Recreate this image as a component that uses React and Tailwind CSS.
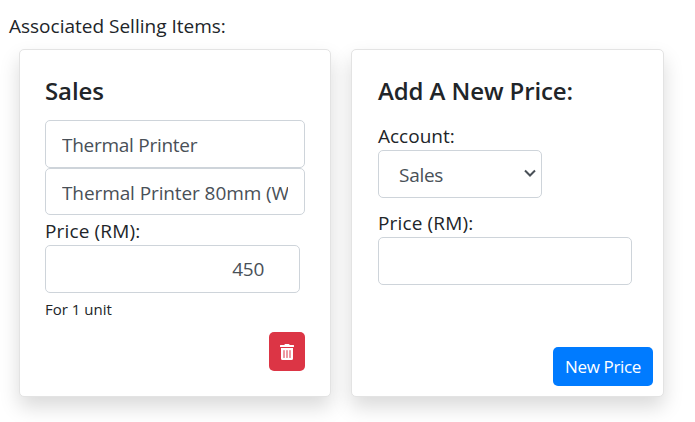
import React from "react";
import { FaTrashAlt } from "react-icons/fa";

const font = "font-['Open_Sans','Noto_Sans',sans-serif]";
const inputClass =
  "block h-[47.5px] rounded-[5px] border border-[#ced4da] bg-white text-[19px] text-[#495057] outline-none";
const cardClass =
  "h-[348px] rounded-[5px] border border-[#e3e3e3] bg-white pt-[24px] shadow-[0_10px_20px_rgba(0,0,0,0.15)]";

export default function App() {
  return (
    <div className={`${font} h-[422px] w-[695px] overflow-hidden bg-white text-[#212529]`}>
      <p className="pl-[9px] pt-[12px] text-[19px] leading-[28px]">Associated Selling Items:</p>

      <div className="ml-[19px] mt-[9px] flex gap-[20px]">
        <div className={`${cardClass} w-[312px] px-[25px]`}>
          <h2 className="text-[24px] font-[560] leading-[34px] tracking-[-0.1px]">Sales</h2>
          <input
            className={`${inputClass} mt-[12px] w-[260px] px-[16px] pt-[2px] tracking-[-0.27px]`}
            defaultValue="Thermal Printer"
            readOnly
          />
          <input
            className={`${inputClass} w-[260px] px-[16px] pt-[3px] tracking-[-0.1px]`}
            defaultValue="Thermal Printer 80mm (W"
            readOnly
          />
          <label className="mt-[2px] block text-[19px] leading-[28px] tracking-[0.15px]">Price (RM):</label>
          <input
            className={`${inputClass} w-[255px] pr-[35px] text-right tracking-[-0.27px]`}
            defaultValue="450"
            readOnly
          />
          <p className="mt-[5px] text-[15px] leading-[22px]">For 1 unit</p>
          <div className="mt-[12px] flex justify-end">
            <button className="flex h-[39px] w-[36px] items-center justify-center rounded-[5px] bg-[#dc3545] pt-[1px] text-white">
              <FaTrashAlt size={16} />
            </button>
          </div>
        </div>

        <div className={`${cardClass} w-[313px] pl-[26px] pr-[10px]`}>
          <h2 className="text-[24px] font-[560] leading-[34px] tracking-[-0.1px]">Add A New Price:</h2>
          <label className="mt-[14px] block text-[19px] leading-[28px]">Account:</label>
          <div className="relative w-[164px]">
            <select
              className={`${inputClass} w-[164px] appearance-none pl-[20px] pt-[2px] tracking-[-0.27px]`}
              defaultValue="Sales"
            >
              <option>Sales</option>
            </select>
            <svg
              className="absolute right-[6px] top-[19px]"
              width="12"
              height="8"
              viewBox="0 0 12 8"
              fill="none"
              stroke="#495057"
              strokeWidth="2"
            >
              <path d="M1 1.500l5 5 5-5" />
            </svg>
          </div>
          <label className="mt-[11px] block text-[19px] leading-[28px] tracking-[0.15px]">Price (RM):</label>
          <input className={`${inputClass} h-[48px] w-[254px]`} readOnly />
          <div className="mt-[62.5px] flex justify-end">
            <button className="h-[39px] w-[100px] rounded-[5px] bg-[#007bff] text-[17px] tracking-[-0.35px] text-white">
              New Price
            </button>
          </div>
        </div>
      </div>
    </div>
  );
}
